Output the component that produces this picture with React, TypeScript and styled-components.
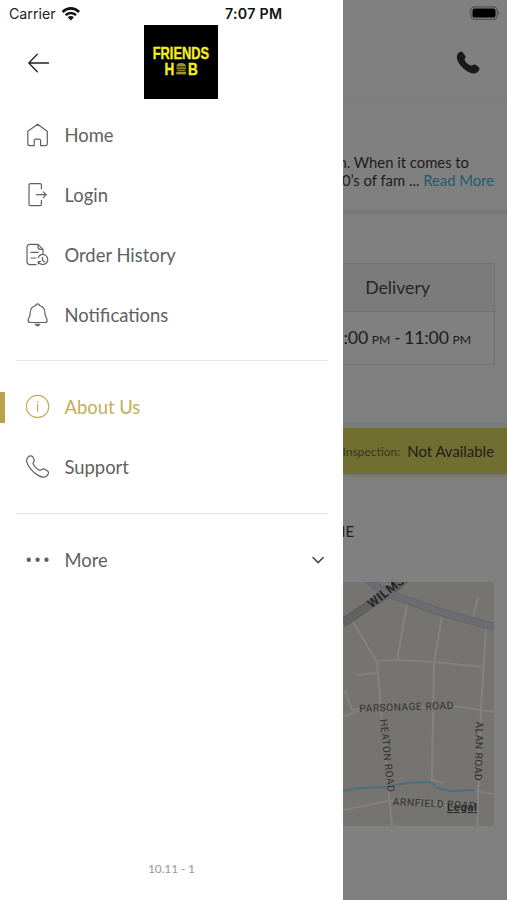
import React from "react";
import styled, { createGlobalStyle } from "styled-components";

const GlobalStyle = createGlobalStyle`
  * { box-sizing: border-box; }
  body { margin: 0; background: #fff; }
`;

const Screen = styled.div`
  display: grid;
  grid-template-columns: 343px 164px;
  width: 507px;
  height: 900px;
  overflow: hidden;
  font-family: Lato, sans-serif;
`;

/* ---------- drawer ---------- */

const Drawer = styled.aside`
  display: flex;
  flex-direction: column;
  background: #fff;
  overflow: hidden;
`;

const StatusBar = styled.div`
  display: grid;
  grid-template-columns: 216px 1fr;
  align-items: center;
  height: 25px;
  padding: 2px 0 0 9px;
  font: 400 14.2px Inter, sans-serif;
  color: #222;
`;

const Carrier = styled.div`
  display: flex;
  align-items: center;
  gap: 6px;
`;

const Clock = styled.div`
  font-weight: 600;
  font-size: 14.2px;
  letter-spacing: 0.3px;
  color: #111;
`;

const DrawerHeader = styled.header`
  display: grid;
  grid-template-columns: 118px 74px;
  height: 80px;
  padding-left: 26px;
`;

const BackButton = styled.button`
  display: flex;
  align-items: center;
  justify-content: flex-start;
  height: 76px;
  padding: 0;
  border: 0;
  background: none;
`;

const Logo = styled.div`
  display: flex;
  flex-direction: column;
  align-items: center;
  width: 74px;
  height: 74px;
  padding-top: 20px;
  background: #000;
`;

const Menu = styled.nav`
  display: flex;
  flex-direction: column;
`;

const MenuItem = styled.a<{ $active?: boolean }>`
  display: grid;
  grid-template-columns: 5px 59.5px 1fr 34px;
  align-items: center;
  height: 60px;
  font-size: 18.4px;
  color: ${(p) => (p.$active ? "#bfae58" : "#606060")};
  svg { display: block; }
`;

const Marker = styled.span<{ $active?: boolean }>`
  height: 31px;
  background: ${(p) => (p.$active ? "#b8a34a" : "transparent")};
`;

const IconCell = styled.span`
  padding-left: 20px;
`;

const Divider = styled.hr`
  height: 1px;
  width: 312px;
  margin: 15px 0 16px 16px;
  border: 0;
  background: #e4e4e4;

  &:last-of-type { margin-top: 16px; }
`;

const Version = styled.div`
  margin: auto 0 23px;
  text-align: center;
  font-size: 12px;
  letter-spacing: -0.15px;
  line-height: 16px;
  color: #999;
`;

/* ---------- dimmed page ---------- */

const Page = styled.main`
  display: flex;
  flex-direction: column;
  background: #808080;
  color: #1d1d1d;
  overflow: hidden;
`;

const PageHeader = styled.header`
  display: flex;
  flex-direction: column;
  align-items: flex-end;
  height: 100px;
  padding: 6px 7px 0 0;
  gap: 30px;
  border-bottom: 2px solid #7d7d7d;
`;

const CallButton = styled.button`
  padding: 0;
  margin-right: 20px;
  border: 0;
  background: none;
  svg { display: block; }
`;

const About = styled.section`
  display: flex;
  flex-direction: column;
  align-items: flex-end;
  height: 114px;
  padding: 53px 13px 0 0;
  border-bottom: 4px solid #787878;
  font-size: 14.8px;
  line-height: 18px;
  white-space: nowrap;
`;

const AboutLine = styled.div<{ $inset?: number }>`
  margin-right: ${(p) => p.$inset ?? 0}px;
  a { color: #215c72; }
`;

const Hours = styled.section`
  height: 214px;
  padding: 49px 12px 0 0;
  border-bottom: 5px solid #797b7d;
`;

const HoursTable = styled.div`
  display: grid;
  grid-template-columns: minmax(0, 1fr);
  grid-template-rows: 48px 52px;
  border: 1px solid #707070;
  border-left: 0;
`;

const HoursHead = styled.div`
  display: flex;
  align-items: center;
  justify-content: flex-end;
  padding: 0 64px 1px 0;
  background: #7b7b7b;
  border-bottom: 1px solid #707070;
  font-size: 17.7px;
  color: #262626;
`;

const HoursValue = styled.div`
  display: flex;
  align-items: center;
  justify-content: flex-end;
  padding: 0 23px 1px 0;
  font-size: 17.7px;
  white-space: pre;
  word-spacing: -0.8px;
  letter-spacing: -0.1px;
  small { font-size: 12.2px; padding-top: 4px; letter-spacing: -0.1px; }
`;

const Inspection = styled.section`
  display: flex;
  align-items: center;
  justify-content: flex-end;
  gap: 7px;
  height: 46px;
  padding-right: 13px;
  background: #716e32;
  box-shadow: 0 2px 3px rgba(0, 0, 0, 0.1);
  font-size: 14.9px;
  white-space: nowrap;
  small { font-size: 12px; color: #383620; }
`;

const SectionTitle = styled.h2`
  margin: 47px 0 0 -9px;
  height: 61px;
  font-size: 15px;
  line-height: 20px;
  font-weight: 400;
`;

const MapView = styled.svg`
  display: block;
  background: #757470;
  font-family: Roboto, sans-serif;
`;

/* ---------- icons ---------- */

const Glyph = ({ children }: { children: React.ReactNode }) => (
  <svg width="26" height="26" viewBox="0 0 26 26" fill="none" stroke="currentColor"
    strokeWidth="1.2" strokeLinecap="round" strokeLinejoin="round">{children}</svg>
);

const HomeIcon = () => (
  <Glyph>
    <path d="M2.8 9.2V21.5Q2.8 23.6 4.8 23.6H9.2V18.5Q9.2 17.1 10.6 17.1H14.2Q15.6 17.1 15.6 18.5V23.6H20.3Q22.3 23.6 22.3 21.5V9.2L12.6 2.2Z" />
  </Glyph>
);
const LoginIcon = () => (
  <Glyph>
    <path d="M16.4 6.8V2.9Q16.4 1.7 15.2 1.7H5.4Q4 1.7 4 3.1V22.3Q4 23.7 5.4 23.7H15.2Q16.4 23.7 16.4 22.5V18.4M11.5 12.7H21M18.3 9.8L21.2 12.7L18.3 15.6" />
  </Glyph>
);
const HistoryIcon = () => (
  <Glyph>
    <path d="M11 22.7H5Q2 22.7 2 19.7V5.3Q2 2.3 5 2.3H13L18 7.4V11.3M13 2.3V4.8Q13 7.4 15.4 7.4H18M6 10.4H13.3M6 16H11" />
    <path d="M13.1 15.7A5 5 0 1 1 13.3 19.7M13.3 22V19.5H15.8M17.5 15.3V18.2L19.6 19.9" />
  </Glyph>
);
const BellIcon = () => (
  <Glyph>
    <path d="M10.9 3.5A1.7 1.7 0 1 1 14.3 3.5C18.6 4.5 20 8 20 11.5C20 14.7 22.1 16 22.1 18.5Q22.1 20.5 19.8 20.5H5.4Q3.1 20.5 3.1 18.5C3.1 16 5.2 14.7 5.2 11.5C5.2 8 6.6 4.5 10.9 3.5Z" />
    <path d="M10.2 22.2H15Q14.5 24.1 12.6 24.1Q10.7 24.1 10.2 22.2Z" fill="currentColor" strokeWidth=".7" />
  </Glyph>
);
const InfoIcon = () => (
  <Glyph>
    <circle cx="12.6" cy="12.5" r="11.2" />
    <path d="M12.6 10.7V17.4" />
    <circle cx="12.6" cy="8" r=".5" fill="currentColor" strokeWidth=".5" />
  </Glyph>
);
const SupportIcon = () => (
  <Glyph>
    <path d="M2.7 3.5C4.2 1.6 6.4 1.1 7.8 2.9L9.2 5.8C9.8 7.2 8.2 8.1 8 9.1C8.1 11.3 12.4 16 15 16.4C16.6 16.4 17.2 14.3 19 14.9L22.3 16.8C24.6 18.3 23.2 20.6 21.4 22.2C17.5 25.4 9.4 19.8 5.8 15.1C2.2 10.7.6 6.2 2.7 3.5Z" />
  </Glyph>
);
const DotsIcon = () => (
  <svg width="26" height="26" viewBox="0 0 26 26" fill="currentColor">
    <circle cx="3.8" cy="12.7" r="2.2" /><circle cx="12.6" cy="12.7" r="2.2" /><circle cx="21.5" cy="12.7" r="2.2" />
  </svg>
);
const Chevron = () => (
  <svg width="16" height="14" viewBox="0 0 16 14" fill="none" stroke="#444" strokeWidth="1.5" strokeLinecap="round">
    <path d="M4 4.5L9.1 9.6L14.2 4.5" />
  </svg>
);
const WifiIcon = () => (
  <svg width="20" height="14" viewBox="0 0 20 14" fill="none" stroke="#111" strokeWidth="2.6">
    <path d="M.5 5C5.5.2 12.1.2 17.1 5M3.6 8.2C6.5 5.3 11.1 5.3 14 8.2" />
    <path d="M5.7 10.2Q8.8 7.7 11.9 10.2L8.8 13.4Z" fill="#111" stroke="none" />
  </svg>
);
const ArrowIcon = () => (
  <svg width="26" height="22" viewBox="0 0 26 22" fill="none" stroke="#222" strokeWidth="1.3" strokeLinecap="round" strokeLinejoin="round">
    <path d="M22.5 11H2.8M11.3 2.3L2.8 11L11.3 19.7" />
  </svg>
);
const BatteryIcon = () => (
  <svg width="30" height="15" viewBox="0 0 30 15">
    <rect x=".8" y=".8" width="26.4" height="12.6" rx="4" fill="none" stroke="#535353" strokeWidth="1.2" />
    <rect x="2.5" y="2.6" width="23" height="9" rx="2.2" fill="#000" />
    <path d="M28.2 4.8Q31 7.1 28.2 9.3Z" fill="#535353" />
  </svg>
);
const PhoneIcon = () => (
  <svg width="24" height="24" viewBox="0 0 24 24" fill="#1a1a1a">
    <path d="M1.9 2.4C3.2.9 5.2.1 6.6 1.2L9.3 4.7C10.2 6.3 8.5 7.5 8.6 8.9C9.5 11.1 12.4 13.9 14.8 14.6C16.3 14.7 17.5 13.1 19.2 13.5L22.6 16C24.4 17.6 23.1 19.6 21.4 21.2C18.6 23.9 13.1 22.4 8.2 18.1C3.1 13.7-1.3 7 1.9 2.4Z" />
  </svg>
);

const LogoArt = () => (
  <svg width="58" height="34" viewBox="0 0 58 34" fill="#f4ed20" fontFamily="'Liberation Sans', sans-serif" fontWeight="700">
    <g stroke="#f4ed20" strokeWidth=".4">
      <text x=".8" y="14.2" fontSize="16.4" textLength="56.2" lengthAdjust="spacingAndGlyphs">FRIENDS</text>
      <text x="12.6" y="29.8" fontSize="16.4" textLength="9.8" lengthAdjust="spacingAndGlyphs">H</text>
      <text x="36" y="29.8" fontSize="16.4" textLength="9.8" lengthAdjust="spacingAndGlyphs">B</text>
    </g>
    <g fill="#9d942b">
      <path d="M24.3 21.4Q24.8 18 29.1 18Q33.5 18 34.1 21.4Z" />
      <rect x="24.3" y="22.4" width="9.8" height="1.5" />
      <rect x="25" y="24.7" width="8.4" height="1.2" />
      <rect x="24.3" y="26.7" width="9.8" height="2.7" />
    </g>
  </svg>
);

const AreaMap = () => (
  <MapView width="151" height="244" viewBox="0 0 151 244">
    <g fill="none" stroke="#82817e" strokeWidth="2.2" strokeLinejoin="round">
      <path d="M10 40L34 80L38 128L49 245M64 23L54 78M99 35L91 80L89 198L100 201" />
      <path d="M34 79L54 78L91 80L140 85M143 45L138 128L134 245M135 15L130 37M14 93L34 91M2 108L9 128L20 126" />
      <path d="M0 135L20 127L112 124L151 130M132 209L151 212M0 228L50 218L134 227" />
    </g>
    <path d="M0 41L26 23L48 9L63-4" stroke="#5c5c5b" strokeWidth="9" fill="none" />
    <path d="M0 41L26 23L48 9L63-4" stroke="#626262" strokeWidth="7" fill="none" />
    <path d="M25-3C35 7 45 12 55 15L97 30L151 45" stroke="#64656a" strokeWidth="8" fill="none" />
    <path d="M25-3C35 7 45 12 55 15L97 30L151 45" stroke="#6c6d73" strokeWidth="6" fill="none" />
    <path d="M0 209L17 206L40 205L64 201L85 200L90 202L94 206L107 209L132 208" stroke="#48717f" strokeWidth="1.8" fill="none" />
    <g fill="#323232" fontSize="10.2" stroke="#757470" strokeWidth="2" paintOrder="stroke">
      <text transform="translate(16.5 130) rotate(-2)" textLength="94">PARSONAGE ROAD</text>
      <text transform="translate(37 137.5) rotate(84)" textLength="73">HEATON ROAD</text>
      <text transform="translate(133 139.5) rotate(91.5)" textLength="59">ALAN ROAD</text>
      <text transform="translate(49.5 223) rotate(3)" textLength="83">ARNFIELD ROAD</text>
    </g>
    <text transform="translate(28.5 26.5) rotate(-38)" fontSize="12.5" fontWeight="500" fill="#1d1d1d" letterSpacing=".7">WILMSLOW</text>
    <text x="104" y="229" fontSize="11" fontWeight="700" fill="#2a2a2a" textLength="30" textDecoration="underline" stroke="#757470" strokeWidth=".4" paintOrder="stroke">Legal</text>
  </MapView>
);

type ItemProps = { icon: React.ReactNode; label: string; active?: boolean; expandable?: boolean };
const Item = ({ icon, label, active, expandable }: ItemProps) => (
  <MenuItem $active={active}>
    <Marker $active={active} />
    <IconCell>{icon}</IconCell>
    <span>{label}</span>
    {expandable && <Chevron />}
  </MenuItem>
);

export default function App() {
  return (
    <Screen>
      <GlobalStyle />
      <Drawer>
        <StatusBar>
          <Carrier>Carrier <WifiIcon /></Carrier>
          <Clock>7:07 PM</Clock>
        </StatusBar>
        <DrawerHeader>
          <BackButton aria-label="Back"><ArrowIcon /></BackButton>
          <Logo><LogoArt /></Logo>
        </DrawerHeader>
        <Menu>
          <Item icon={<HomeIcon />} label="Home" />
          <Item icon={<LoginIcon />} label="Login" />
          <Item icon={<HistoryIcon />} label="Order History" />
          <Item icon={<BellIcon />} label="Notifications" />
          <Divider />
          <Item icon={<InfoIcon />} label="About Us" active />
          <Item icon={<SupportIcon />} label="Support" />
          <Divider />
          <Item icon={<DotsIcon />} label="More" expandable />
        </Menu>
        <Version>10.11 - 1</Version>
      </Drawer>
      <Page>
        <PageHeader>
          <BatteryIcon />
          <CallButton aria-label="Call"><PhoneIcon /></CallButton>
        </PageHeader>
        <About>
          <AboutLine $inset={25}>n. When it comes to</AboutLine>
          <AboutLine>00’s of fam ... <a>Read More</a></AboutLine>
        </About>
        <Hours>
          <HoursTable>
            <HoursHead>Delivery</HoursHead>
            <HoursValue>:00 <small>PM</small> - 11:00 <small>PM</small></HoursValue>
          </HoursTable>
        </Hours>
        <Inspection><small>Inspection:</small>Not Available</Inspection>
        <SectionTitle>NE</SectionTitle>
        <AreaMap />
      </Page>
    </Screen>
  );
}
